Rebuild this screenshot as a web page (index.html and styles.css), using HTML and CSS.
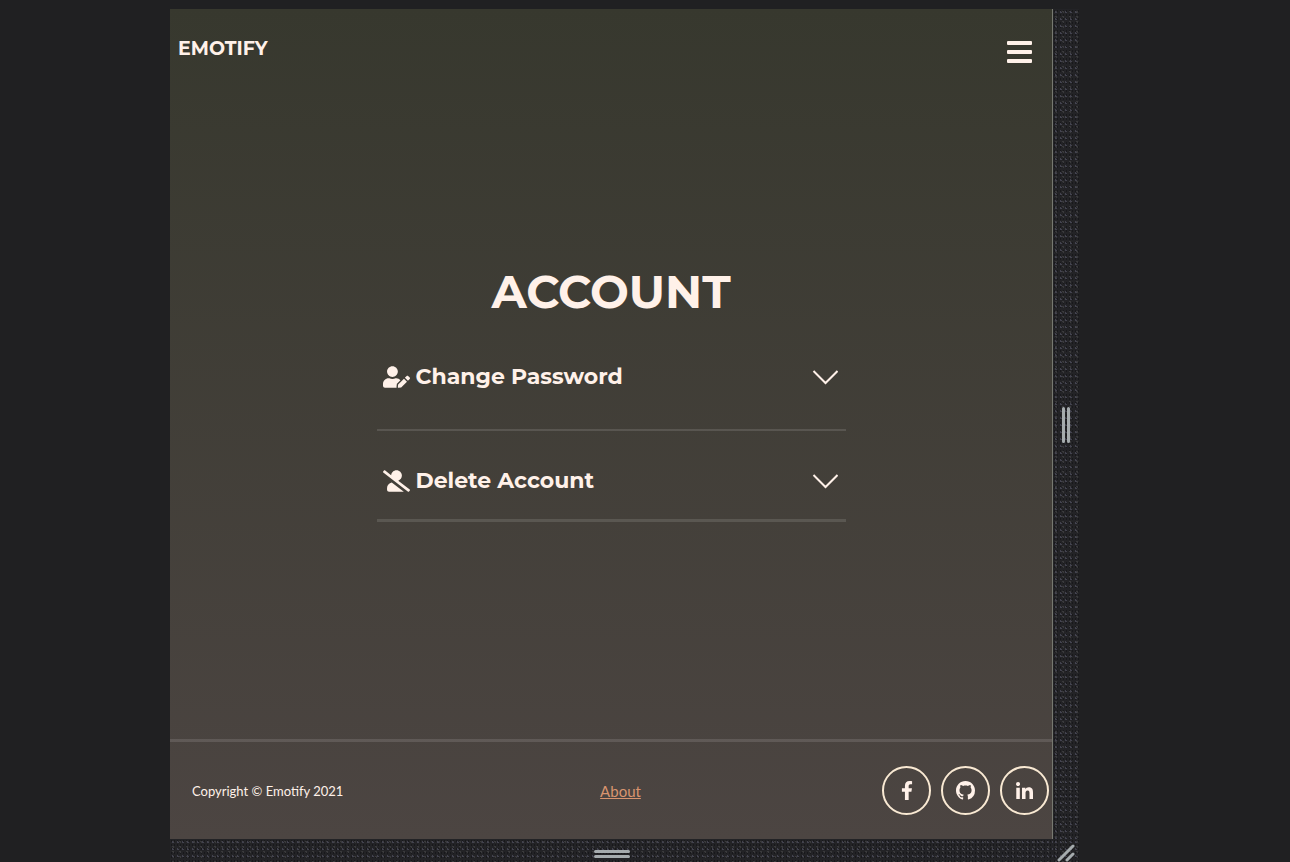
FILE: index.html
```html
<!DOCTYPE html>
<html lang="en">
<head>
<meta charset="utf-8">
<meta name="viewport" content="width=device-width, initial-scale=1">
<title>Emotify – Account</title>
<link rel="stylesheet" href="styles.css">
</head>
<body>
<div class="stage">
  <div class="page">
    <header class="topbar">
      <a class="brand" href="#">EMOTIFY</a>
      <button class="menu" type="button" aria-label="Menu">
        <svg viewBox="0 0 25 22" width="25" height="22" aria-hidden="true"><rect width="25" height="4" rx="1"/><rect y="9" width="25" height="4" rx="1"/><rect y="18" width="25" height="4" rx="1"/></svg>
      </button>
    </header>
    <main class="account">
      <h1 class="title">ACCOUNT</h1>
      <button class="item item-first" type="button" aria-expanded="false">
        <svg class="item-icon" viewBox="0 0 640 512" aria-hidden="true"><path d="M224 256c70.7 0 128-57.3 128-128S294.7 0 224 0 96 57.3 96 128s57.3 128 128 128zm89.6 32h-16.7c-22.2 10.2-46.9 16-72.9 16s-50.6-5.8-72.9-16h-16.7C60.2 288 0 348.2 0 422.4V464c0 26.5 21.5 48 48 48h274.9c-2.4-6.8-3.4-14-2.6-21.3l6.8-60.9 1.2-11.1 7.9-7.9 77.3-77.3c-24.5-27.7-60-45.5-99.9-45.5zm45.3 145.3l-6.8 61c-1.1 10.2 7.5 18.8 17.6 17.6l60.9-6.8 137.9-137.9-71.7-71.7-137.9 137.8zM633 268.9L595.1 231c-9.3-9.3-24.5-9.3-33.8 0l-37.8 37.8-4.1 4.1 71.8 71.7 41.8-41.8c9.3-9.4 9.3-24.5 0-33.9z"/></svg>
        <span class="item-label">Change Password</span>
        <svg class="chevron" viewBox="0 0 26 16" aria-hidden="true"><path d="M1.500 2l12 12 12-12"/></svg>
      </button>
      <button class="item" type="button" aria-expanded="false">
        <svg class="item-icon" viewBox="0 0 640 512" aria-hidden="true"><path d="M633.8 458.100L362.300 248.300C412.100 230.700 448 183.800 448 128 448 57.300 390.700 0 320 0c-67.100 0-121.500 51.800-126.900 117.400L45.500 3.400C38.500-2 28.500-.8 23 6.200L3.400 31.400c-5.400 7-4.200 17 2.800 22.400l588.400 454.700c7 5.400 17 4.200 22.500-2.800l19.600-25.300c5.400-6.900 4.200-17-2.900-22.300zM96 422.400V464c0 26.500 21.400 48 48 48h350.200L207.400 290.300C144.200 301.300 96 356 96 422.400z"/></svg>
        <span class="item-label">Delete Account</span>
        <svg class="chevron" viewBox="0 0 26 16" aria-hidden="true"><path d="M1.500 2l12 12 12-12"/></svg>
      </button>
    </main>
    <footer class="footer">
      <p class="copyright">Copyright © Emotify 2021</p>
      <a class="about" href="#">About</a>
      <nav class="social" aria-label="Social links">
        <a class="social-link" href="#" aria-label="Facebook"><svg viewBox="0 0 320 512" width="12" height="19" aria-hidden="true"><path d="M279.140 288l14.220-92.660h-88.910v-60.130c0-25.350 12.420-50.060 52.240-50.060h40.420V6.260S260.430 0 225.360 0c-73.220 0-121.080 44.380-121.080 124.720v70.620H22.890V288h81.390v224h100.170V288z"/></svg></a>
        <a class="social-link" href="#" aria-label="GitHub"><svg viewBox="0 0 16 16" width="19" height="19" aria-hidden="true"><path d="M8 0C3.580 0 0 3.580 0 8c0 3.540 2.290 6.530 5.470 7.590.4.07.55-.17.55-.38 0-.19-.01-.82-.01-1.490-2.010.37-2.530-.49-2.690-.94-.09-.23-.48-.94-.82-1.130-.28-.15-.68-.52-.01-.53.63-.01 1.080.58 1.230.82.72 1.210 1.870.87 2.330.66.07-.52.28-.87.51-1.070-1.780-.2-3.640-.89-3.640-3.950 0-.87.31-1.590.82-2.150-.08-.2-.36-1.020.08-2.120 0 0 .67-.21 2.200.82.64-.18 1.320-.27 2-.27s1.360.09 2 .27c1.530-1.040 2.200-.82 2.200-.82.44 1.100.16 1.920.08 2.120.51.56.82 1.270.82 2.150 0 3.070-1.870 3.750-3.650 3.950.29.25.54.73.54 1.480 0 1.070-.01 1.930-.01 2.200 0 .21.15.46.55.38A8.010 8.010 0 0 0 16 8c0-4.420-3.580-8-8-8z"/></svg></a>
        <a class="social-link" href="#" aria-label="LinkedIn"><svg viewBox="0 0 448 448" width="17" height="17" aria-hidden="true"><path d="M100.280 448H7.400V148.900h92.880zM53.790 108.100C24.090 108.100 0 83.500 0 53.800a53.790 53.790 0 0 1 107.580 0c0 29.700-24.100 54.300-53.790 54.300zM447.900 448h-92.680V302.400c0-34.700-.7-79.200-48.290-79.200-48.290 0-55.690 37.700-55.690 76.700V448h-92.780V148.900h89.080v40.800h1.300c12.400-23.500 42.690-48.300 87.880-48.300 94 0 111.280 61.900 111.280 142.300V448z"/></svg></a>
      </nav>
    </footer>
  </div>
  <div class="grip grip-side"><svg viewBox="0 0 8 36" width="8" height="36" aria-hidden="true"><path d="M1.500 1.500v33M6.500 1.500v33"/></svg></div>
  <div class="grip grip-bottom"><svg viewBox="0 0 36 8" width="36" height="8" aria-hidden="true"><path d="M1.500 1.500h33M1.500 6.500h33"/></svg></div>
  <div class="grip grip-corner"><svg viewBox="0 0 18 18" width="18" height="18" aria-hidden="true"><path d="M2 16L16 2M10 16l6-6"/></svg></div>
</div>
</body>
</html>
```
FILE: styles.css
```css
:root {
  --cream: #fff1e9;
  --line: rgba(255, 255, 255, 0.12);
  --heading: Montserrat, Inter, sans-serif;
}

* { box-sizing: border-box; }

body {
  margin: 0;
  background: #202022;
  color: var(--cream);
  font-family: Lato, sans-serif;
}

.stage {
  display: grid;
  grid-template-columns: minmax(0, 883fr) 26px;
  grid-template-rows: 1fr 23px;
  min-height: 100vh;
  padding: 9px 211px 0 170px;
}

.page {
  display: flex;
  flex-direction: column;
  border-right: 1px solid #777970;
  background: linear-gradient(#37382e, #4c4542);
}

.topbar {
  display: flex;
  align-items: flex-start;
  justify-content: space-between;
  padding: 28px 16px 0 8px;
}

.brand {
  color: var(--cream);
  font: 700 19px/24px var(--heading);
  text-decoration: none;
}

.menu {
  display: flex;
  padding: 4px;
  border: 0;
  background: none;
  fill: var(--cream);
  cursor: pointer;
}

.account {
  display: flex;
  flex: 1;
  flex-direction: column;
  justify-content: center;
  width: 100%;
  max-width: 469px;
  margin: 0 auto;
  padding-bottom: 20px;
}

.title {
  margin: 0 0 31px;
  font: 700 46px/56px var(--heading);
  text-align: center;
}

.item {
  display: flex;
  align-items: center;
  gap: 6px;
  padding: 36px 8px 24px 6px;
  border: 0;
  border-bottom: 3px solid var(--line);
  background: none;
  color: var(--cream);
  font: 700 22px/28px var(--heading);
  text-align: left;
  cursor: pointer;
}

.item-first {
  padding-top: 12px;
  padding-bottom: 38px;
  border-bottom-width: 2px;
}

.item-icon {
  width: 27px;
  height: 22px;
  fill: currentColor;
}

.item-label { flex: 1; }

.chevron {
  width: 26px;
  height: 16px;
  fill: none;
  stroke: currentColor;
  stroke-width: 2;
}

.footer {
  display: grid;
  grid-template-columns: 1fr auto 1fr;
  align-items: center;
  padding: 24px 3px 24px 22px;
  border-top: 3px solid var(--line);
}

.copyright {
  margin: 0;
  font-size: 13px;
  line-height: 18px;
}

.about {
  color: #d9946f;
  font-size: 15px;
  line-height: 20px;
}

.social {
  display: flex;
  justify-content: flex-end;
  gap: 10px;
}

.social-link {
  display: flex;
  align-items: center;
  justify-content: center;
  width: 49px;
  height: 49px;
  border: 2px solid #f9e9d3;
  border-radius: 50%;
  fill: var(--cream);
}

.grip {
  display: flex;
  align-items: center;
  justify-content: center;
  background-color: #232326;
  background-image:
    radial-gradient(circle, #43434f 1px, transparent 1px),
    radial-gradient(circle, #3a3a3c 1px, transparent 1px),
    radial-gradient(circle, #18181b 1px, transparent 1px);
  background-size: 5px 7px, 7px 5px, 3px 4px;
}

.grip-side { padding-top: 2px; }

.grip-bottom { padding-top: 6px; }

.grip-corner { padding-top: 4px; }

.grip svg {
  fill: none;
  stroke: #a5abad;
  stroke-width: 3;
  stroke-linecap: round;
}
```
